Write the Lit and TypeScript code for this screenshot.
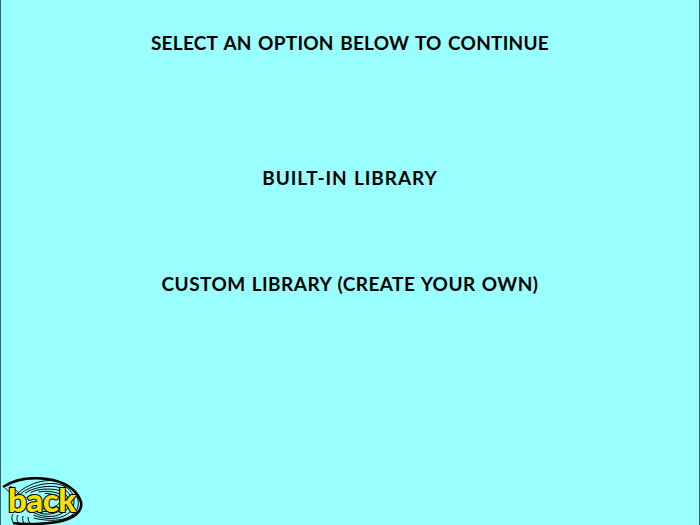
import { LitElement, html, css, svg } from "lit";
import { customElement } from "lit/decorators.js";

/* Fingerprint-like ridges: concentric arcs around the middle of the oval. */
function ridge(scale: number, from: number, to: number): string {
  const cx = 46;
  const cy = 24;
  const pts: string[] = [];
  for (let a = from; a <= to; a += 10) {
    const r = (a * Math.PI) / 180;
    const wobble = 1 + 0.05 * Math.sin(r * 3 + scale * 6);
    const x = cx + 36 * scale * wobble * Math.cos(r);
    const y = cy + 22 * scale * wobble * Math.sin(r);
    pts.push(`${x.toFixed(1)} ${y.toFixed(1)}`);
  }
  return "M" + pts.join("L");
}

const ridges = [
  ridge(0.9, -165, 115),
  ridge(0.79, -160, 120),
  ridge(0.68, -150, 130),
  ridge(0.57, -140, 135),
  ridge(0.46, -120, 140),
  ridge(0.35, -100, 150),
  "M12 37C10 40 11 44 13 47",
  "M17 38C15 41 16 44 18 47",
  "M22 39C21 42 22 45 24 48",
  "M27 40C27 43 28 45 30 48",
  "M4 11C8 14 10 17 12 21",
  "M9 9C14 12 18 15 20 20",
];

@customElement("app-root")
export class AppRoot extends LitElement {
  static styles = css`
    :host {
      display: block;
    }
    .screen {
      box-sizing: border-box;
      width: 700px;
      height: 525px;
      background: #99ffff;
      border-left: 1px solid #336666;
      border-right: 1px solid #336666;
      display: flex;
      flex-direction: column;
      align-items: center;
      overflow: hidden;
      color: #000;
      font-family: "Lato", "Open Sans", sans-serif;
      font-size: 19px;
      font-weight: 700;
      line-height: 24px;
    }
    .title {
      margin-top: 31px;
      word-spacing: 1.5px;
      letter-spacing: 0.25px;
    }
    .first {
      margin-top: 111px;
      letter-spacing: 0.9px;
      word-spacing: 1px;
    }
    .second {
      margin-top: 81.5px;
      letter-spacing: 0.45px;
      word-spacing: 1px;
    }
    .back {
      margin-top: auto;
      align-self: flex-start;
      width: 83px;
      height: 48px;
      position: relative;
    }
    .back svg {
      display: block;
      width: 83px;
      height: 48px;
    }
    .back span {
      position: absolute;
      left: 7px;
      top: 2px;
      font-family: "Lato", sans-serif;
      font-size: 33px;
      line-height: 40px;
      font-weight: 900;
      letter-spacing: -0.5px;
      color: #ffe000;
      -webkit-text-stroke: 2.2px #000;
      paint-order: stroke fill;
    }
  `;

  render() {
    return html`
      <div class="screen">
        <div class="title">SELECT AN OPTION BELOW TO CONTINUE</div>
        <div class="first">BUILT-IN LIBRARY</div>
        <div class="second">CUSTOM LIBRARY (CREATE YOUR OWN)</div>
        <div class="back">
          <svg viewBox="0 0 83 48" aria-hidden="true">
            <path
              d="M2 10C14 2 30 0 46 2C62 4 76 12 80 25C82 35 72 42 56 45C44 47 24 48 12 46"
              fill="none"
              stroke="#000"
              stroke-width="2.6"
            />
            ${ridges.map(
              (d) => svg`<path d=${d} fill="none" stroke="#000" stroke-width="1" />`
            )}
          </svg>
          <span>back</span>
        </div>
      </div>
    `;
  }
}
